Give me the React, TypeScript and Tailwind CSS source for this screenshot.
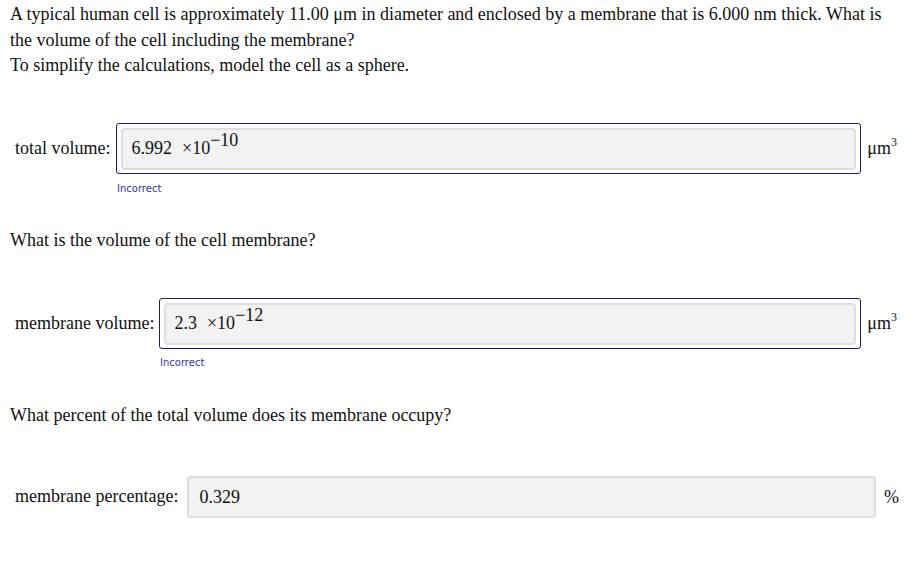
import React from "react";

const serif = { fontFamily: '"Liberation Serif", "Times New Roman", serif' };
const sans = { fontFamily: '"DejaVu Sans", Verdana, sans-serif', fontSize: "10px" };

function Sci({ mant, exp }: { mant: string; exp: string }) {
  return (
    <span className="whitespace-nowrap">
      {mant}
      <span className="ml-[10px]">×10</span>
      <sup className="relative -top-[8px] align-baseline text-[18px]">−{exp}</sup>
    </span>
  );
}

function Unit() {
  return (
    <span className="ml-[6px] whitespace-nowrap">
      μm<sup className="relative -top-[8px] text-[12px]">3</sup>
    </span>
  );
}

function AnswerRow({ label, gap, children }: { label: string; gap: string; children: React.ReactNode }) {
  return (
    <div className="flex items-center pl-[5px]">
      <span className={`whitespace-nowrap ${gap}`}>{label}</span>
      <div className="flex-1 rounded-[3px] border border-[#1e1a70] px-[4px] pt-[4px] pb-[3px]">
        <div className="flex h-[42px] items-center rounded-[4px] border-2 border-[#dedede] bg-[#f2f2f2] pl-[8px]">
          {children}
        </div>
      </div>
      <Unit />
      <span className="w-[14px]" />
    </div>
  );
}

function Feedback({ indent, gap }: { indent: string; gap: string }) {
  return (
    <div className={`${indent} ${gap} leading-[14px] text-[#3434a6]`} style={sans}>
      Incorrect
    </div>
  );
}

export default function App() {
  return (
    <div className="h-[576px] w-[921px] bg-white px-[10px] pt-[2px] text-[18px] text-[#111]" style={serif}>
      <p className="w-[880px] leading-[25.5px]">
        A typical human cell is approximately 11.00 μm in diameter and enclosed by a membrane that is 6.000 nm thick. What is the volume of the cell including the membrane?
        <br />
        To simplify the calculations, model the cell as a sphere.
      </p>

      <div className="mt-[44px]">
        <AnswerRow label="total volume:" gap="mr-[6px]">
          <Sci mant="6.992" exp="10" />
        </AnswerRow>
        <Feedback indent="ml-[107px]" gap="mt-[8px]" />
      </div>

      <p className="mt-[32px] leading-[25px]">What is the volume of the cell membrane?</p>

      <div className="mt-[45px]">
        <AnswerRow label="membrane volume:" gap="mr-[5px]">
          <Sci mant="2.3" exp="12" />
        </AnswerRow>
        <Feedback indent="ml-[150px]" gap="mt-[7px]" />
      </div>

      <p className="mt-[33px] leading-[25px]">What percent of the total volume does its membrane occupy?</p>

      <div className="mt-[48px] flex items-center pl-[5px]">
        <span className="mr-[9px] whitespace-nowrap">membrane percentage:</span>
        <div className="flex h-[42px] flex-1 items-center rounded-[4px] border-2 border-[#dedede] bg-[#f2f2f2] pl-[10px] pt-[2px]">
          0.329
        </div>
        <span className="ml-[8px] mr-[12px] pt-[2px]">%</span>
      </div>
    </div>
  );
}
